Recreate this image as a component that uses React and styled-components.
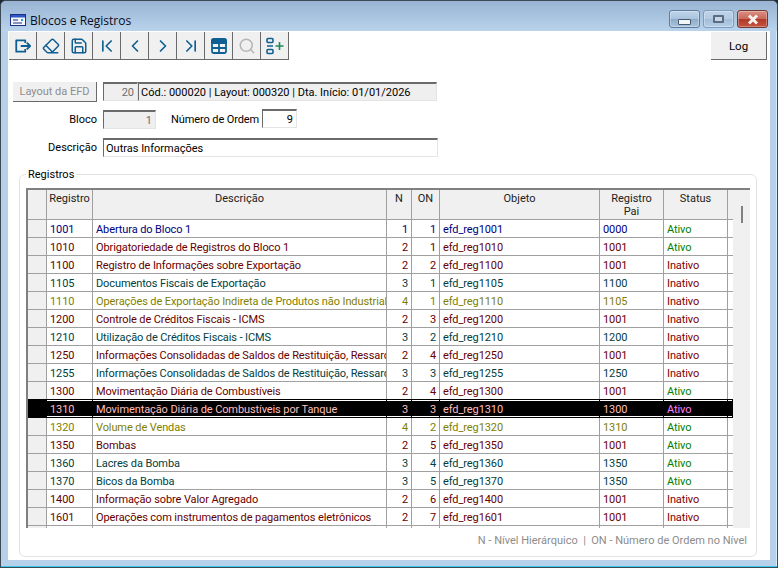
import React from 'react';
import styled, { createGlobalStyle } from 'styled-components';
import { Eraser, Save, ChevronFirst, ChevronLeft, ChevronRight, ChevronLast, Search } from 'lucide-react';

const GlobalStyle = createGlobalStyle`
  html, body {
    margin: 0;
    padding: 0;
    background: #1c2b33;
  }
  body {
    font-family: Roboto, "Liberation Sans", Arial, sans-serif;
    font-size: 11px;
    color: #000;
  }
`;

const LEVEL_COLORS = {
  1: { color: '#000080', inverted: '#ffff7f' },
  2: { color: '#660000', inverted: '#ffbfbf' },
  3: { color: '#004040', inverted: '#ffbfbf' },
  4: { color: '#808000', inverted: '#7f7fff' },
};

const rows = [
  ['1001', 'Abertura do Bloco 1', 1, 1, '0000', 'Ativo'],
  ['1010', 'Obrigatoriedade de Registros do Bloco 1', 2, 1, '1001', 'Ativo'],
  ['1100', 'Registro de Informações sobre Exportação', 2, 2, '1001', 'Inativo'],
  ['1105', 'Documentos Fiscais de Exportação', 3, 1, '1100', 'Inativo'],
  ['1110', 'Operações de Exportação Indireta de Produtos não Industrializados', 4, 1, '1105', 'Inativo'],
  ['1200', 'Controle de Créditos Fiscais - ICMS', 2, 3, '1001', 'Inativo'],
  ['1210', 'Utilização de Créditos Fiscais - ICMS', 3, 2, '1200', 'Inativo'],
  ['1250', 'Informações Consolidadas de Saldos de Restituição, Ressarcimento', 2, 4, '1001', 'Inativo'],
  ['1255', 'Informações Consolidadas de Saldos de Restituição, Ressarcimento', 3, 3, '1250', 'Inativo'],
  ['1300', 'Movimentação Diária de Combustíveis', 2, 4, '1001', 'Ativo'],
  ['1310', 'Movimentação Diária de Combustíveis por Tanque', 3, 3, '1300', 'Ativo'],
  ['1320', 'Volume de Vendas', 4, 2, '1310', 'Ativo'],
  ['1350', 'Bombas', 2, 5, '1001', 'Ativo'],
  ['1360', 'Lacres da Bomba', 3, 4, '1350', 'Ativo'],
  ['1370', 'Bicos da Bomba', 3, 5, '1350', 'Ativo'],
  ['1400', 'Informação sobre Valor Agregado', 2, 6, '1001', 'Inativo'],
  ['1601', 'Operações com instrumentos de pagamentos eletrônicos', 2, 7, '1001', 'Inativo'],
];

const COLUMNS = '19px 46px 294px 25px 28px 160px 64px 64px 5px';

const Window = styled.div`
  width: 778px;
  height: 568px;
  box-sizing: border-box;
  display: flex;
  flex-direction: column;
  overflow: hidden;
  border-radius: 6px 6px 0 0;
  border: 1px solid #3c4a55;
  background: #b7d1ea;
  box-shadow: inset 0 -1px 0 #35c6e8, inset -1px 0 0 #d6ecf8;
`;

const TitleBar = styled.div`
  height: 30px;
  flex: none;
  display: flex;
  align-items: flex-start;
  padding: 0 9px 0 9px;
  background: linear-gradient(#98b4d2, #b9d3ec);
`;

const TitleIcon = styled.svg`
  width: 16px;
  height: 12px;
  margin-top: 13px;
`;

const TitleText = styled.div`
  margin: 11px 0 0 4px;
  font-family: "Open Sans", sans-serif;
  font-size: 12px;
  line-height: 17px;
  color: #0a0a20;
  flex: 1;
`;

const Captions = styled.div`
  display: flex;
  gap: 3px;
  margin-top: 9px;
`;

const CaptionButton = styled.div`
  width: 31px;
  height: 18px;
  box-sizing: border-box;
  display: flex;
  align-items: center;
  justify-content: center;
  border: 1px solid ${(p) => (p.$close ? '#6f3a33' : p.$dim ? '#7e9cbd' : '#5f7c9e')};
  border-radius: 3px;
  background: ${(p) =>
    p.$close
      ? 'linear-gradient(#dc8f84 0%, #c96a5c 48%, #b13a2a 52%, #c4543f 100%)'
      : p.$dim
        ? 'linear-gradient(#bed3e8 0%, #b3cbe3 48%, #a2bdd9 52%, #b6cfe7 100%)'
        : 'linear-gradient(#c0d5e9 0%, #a9c3de 48%, #8eabc9 52%, #a8c4de 100%)'};
  box-shadow: inset 0 0 0 1px rgba(255, 255, 255, 0.3);
`;

const MinGlyph = styled.div`
  width: 11px;
  height: 4px;
  margin-top: 5px;
  background: #f2f5f8;
  border: 1px solid #47586c;
  border-radius: 1px;
`;

const MaxGlyph = styled.div`
  width: 7px;
  height: 4px;
  background: #c6d6e6;
  border: 2px solid #5b6c80;
  border-radius: 1px;
`;

const Content = styled.div`
  flex: none;
  width: 762px;
  height: 529px;
  margin-left: 7px;
  background: #fff;
  display: flex;
  flex-direction: column;
`;

const ToolbarRow = styled.div`
  display: flex;
  justify-content: space-between;
  padding: 1px 3px 0 1px;
`;

const Toolbar = styled.div`
  display: flex;
`;

const ToolButton = styled.div`
  width: 28px;
  height: 28px;
  box-sizing: border-box;
  display: flex;
  align-items: center;
  justify-content: center;
  background: #f0f0f0;
  border-right: 1px solid #6a6a6a;
  border-bottom: 1px solid #6a6a6a;
  color: #0f5f92;
`;

const LogButton = styled(ToolButton)`
  width: 56px;
  color: #000;
  font-size: 11.5px;
`;

const Form = styled.div`
  display: flex;
  flex-direction: column;
  padding-top: 22px;
`;

const FormRow = styled.div`
  display: flex;
  align-items: flex-start;
  height: ${(p) => p.$height}px;
`;

const Label = styled.div`
  width: 89px;
  text-align: right;
  line-height: 19px;
  margin-right: 6px;
  flex: none;
`;

const EfdButton = styled.div`
  width: 84px;
  height: 20px;
  margin: 0 6px 0 5px;
  box-sizing: border-box;
  flex: none;
  text-align: center;
  line-height: 19px;
  background: #f0f0f0;
  color: #8d8d8d;
  border-right: 1px solid #6a6a6a;
  border-bottom: 1px solid #6a6a6a;
`;

const Field = styled.div`
  width: ${(p) => p.$width}px;
  height: 19px;
  box-sizing: border-box;
  flex: none;
  padding: 0 ${(p) => (p.$right ? 3 : 2)}px 0 2px;
  text-align: ${(p) => (p.$right ? 'right' : 'left')};
  line-height: 17px;
  white-space: nowrap;
  overflow: hidden;
  background: ${(p) => (p.$readOnly ? '#efefef' : '#fff')};
  color: ${(p) => (p.$muted ? '#6d6d6d' : '#000')};
  border-top: 2px solid #6b6b6b;
  border-left: 1px solid #6b6b6b;
  border-right: 1px solid #e4e4e4;
  border-bottom: 1px solid #e4e4e4;
`;

const OrderLabel = styled.div`
  line-height: 19px;
  margin: 0 4px 0 15px;
  white-space: nowrap;
  width: 87px;
  flex: none;
  letter-spacing: -0.1px;
`;

const OrderField = styled(Field)`
  margin-top: -1px;
`;

const GroupBox = styled.fieldset`
  margin: 6px 0 0 11px;
  padding: 7px 6px 0;
  width: 738px;
  height: 389px;
  box-sizing: border-box;
  border: 1px solid #e3e3e3;
  border-radius: 6px;
`;

const GroupLegend = styled.legend`
  margin-left: 0;
  padding: 0 2px;
  line-height: 13px;
`;

const GridFrame = styled.div`
  display: flex;
  width: 724px;
  height: 340px;
  box-sizing: border-box;
  border-top: 2px solid #808080;
  border-left: 2px solid #808080;
  overflow: hidden;
`;

const GridBody = styled.div`
  width: 705px;
  flex: none;
`;

const RowLine = styled.div`
  display: grid;
  grid-template-columns: ${COLUMNS};
  height: ${(p) => (p.$header ? 30 : 18)}px;
  background: ${(p) => (p.$header ? '#f0f0f0' : '#fff')};
`;

const SelectedLine = styled(RowLine)`
  background: #000;
  box-shadow: 0 -1px 0 #000;
  position: relative;
`;

const Cell = styled.div`
  box-sizing: border-box;
  border-right: 1px solid #a0a0a0;
  border-bottom: 1px solid #a0a0a0;
  padding: 0 ${(p) => (p.$right ? 3 : 0)}px 0 ${(p) => (p.$right ? 0 : 3)}px;
  line-height: 19px;
  letter-spacing: -0.1px;
  white-space: nowrap;
  overflow: hidden;
  text-align: ${(p) => (p.$right ? 'right' : 'left')};
  color: ${(p) => p.$color || '#000'};
`;

const HeaderCell = styled(Cell)`
  padding: 2px 0 0;
  text-align: center;
  white-space: normal;
  line-height: 13px;
  letter-spacing: 0;
  color: #222;
`;

const IndicatorCell = styled(Cell)`
  background: #f0f0f0;
  padding: 0;
`;

const SelectedCell = styled(Cell)`
  border-color: #000;
  box-shadow: inset 0 1px 0 #fff, inset 0 -1px 0 #fff;
`;

const SelectedIndicator = styled(Cell)`
  border-color: #000;
  background: #000;
`;

const FillerCell = styled.div`
  border-bottom: 1px solid #a0a0a0;
`;

const ScrollStrip = styled.div`
  width: 17px;
  flex: none;
  background: #f0f0f0;
  display: flex;
  justify-content: center;
`;

const ScrollThumb = styled.div`
  width: 2px;
  height: 17px;
  margin-top: 16px;
  background: #808080;
`;

const Legend = styled.div`
  margin-top: 6px;
  padding-right: 3px;
  text-align: right;
  line-height: 13px;
  color: #8c8c8c;
`;

const statusColor = (status) => (status === 'Ativo' ? '#008000' : '#800000');
const invert = (status) => (status === 'Ativo' ? '#ff7fff' : '#7fffff');

function Row({ row, selected }) {
  const [code, description, level, order, parent, status] = row;
  const { color, inverted } = LEVEL_COLORS[level];

  if (selected) {
    return (
      <SelectedLine>
        <SelectedIndicator />
        <SelectedCell $color={inverted}>{code}</SelectedCell>
        <SelectedCell $color={inverted}>{description}</SelectedCell>
        <SelectedCell $color={inverted} $right>{level}</SelectedCell>
        <SelectedCell $color={inverted} $right>{order}</SelectedCell>
        <SelectedCell $color={inverted}>efd_reg{code}</SelectedCell>
        <SelectedCell $color={inverted}>{parent}</SelectedCell>
        <SelectedCell $color={invert(status)}>{status}</SelectedCell>
        <SelectedCell />
      </SelectedLine>
    );
  }

  return (
    <RowLine>
      <IndicatorCell />
      <Cell $color={color}>{code}</Cell>
      <Cell $color={color}>{description}</Cell>
      <Cell $color={color} $right>{level}</Cell>
      <Cell $color={color} $right>{order}</Cell>
      <Cell $color={color}>efd_reg{code}</Cell>
      <Cell $color={color}>{parent}</Cell>
      <Cell $color={statusColor(status)}>{status}</Cell>
      <FillerCell />
    </RowLine>
  );
}

const ExitIcon = () => (
  <svg width="18" height="18" viewBox="0 0 24 24" fill="none" stroke="currentColor" strokeWidth="2.4" strokeLinejoin="round">
    <path d="M15 8V4.5H3v15h12V16" />
    <path d="M9 12h12M17 7.5l4.5 4.5-4.5 4.5" />
  </svg>
);

const TableIcon = () => (
  <svg width="18" height="18" viewBox="0 0 18 18" fill="none" stroke="currentColor" strokeWidth="1.8">
    <rect x="2" y="2" width="14" height="14" rx="1.5" />
    <path d="M2 3.5h14v2.5h-14z" fill="currentColor" />
    <path d="M2 11h14M9 6v10" />
  </svg>
);

const AddListIcon = () => (
  <svg width="20" height="18" viewBox="0 0 20 18" fill="none" strokeWidth="1.6">
    <rect x="2" y="1.5" width="6" height="4" rx="1" stroke="#0f5f92" />
    <path d="M2 9h6" stroke="#0f5f92" />
    <rect x="2" y="12.5" width="6" height="4" rx="1" stroke="#0f5f92" />
    <path d="M10.5 9h8M14.5 5v8" stroke="#1c8a5a" />
  </svg>
);

const WindowIcon = () => (
  <TitleIcon viewBox="0 0 16 12">
    <rect x="0.5" y="0.5" width="15" height="11" fill="#f4f8fc" stroke="#1d2f86" />
    <rect x="1" y="1" width="14" height="2.5" fill="#2f58c0" />
    <path d="M3 6h5M3 9h9" stroke="#1d2f86" strokeWidth="1" />
    <rect x="11" y="5" width="2" height="2" fill="#2f9bd8" />
  </TitleIcon>
);

export default function App() {
  return (
    <>
      <GlobalStyle />
      <Window>
        <TitleBar>
          <WindowIcon />
          <TitleText>Blocos e Registros</TitleText>
          <Captions>
            <CaptionButton><MinGlyph /></CaptionButton>
            <CaptionButton $dim><MaxGlyph /></CaptionButton>
            <CaptionButton $close>
              <svg width="14" height="11" viewBox="0 0 14 11">
                <path d="M3 1.5l8 8M11 1.5l-8 8" stroke="#f6f0ee" strokeWidth="3" />
              </svg>
            </CaptionButton>
          </Captions>
        </TitleBar>
        <Content>
          <ToolbarRow>
            <Toolbar>
              <ToolButton><ExitIcon /></ToolButton>
              <ToolButton><Eraser size={18} strokeWidth={2} /></ToolButton>
              <ToolButton><Save size={18} strokeWidth={2} /></ToolButton>
              <ToolButton><ChevronFirst size={20} strokeWidth={2} /></ToolButton>
              <ToolButton><ChevronLeft size={20} strokeWidth={2} /></ToolButton>
              <ToolButton><ChevronRight size={20} strokeWidth={2} /></ToolButton>
              <ToolButton><ChevronLast size={20} strokeWidth={2} /></ToolButton>
              <ToolButton><TableIcon /></ToolButton>
              <ToolButton><Search size={18} strokeWidth={2} color="#b5b5b5" /></ToolButton>
              <ToolButton><AddListIcon /></ToolButton>
            </Toolbar>
            <LogButton>Log</LogButton>
          </ToolbarRow>
          <Form>
            <FormRow $height={28}>
              <EfdButton>Layout da EFD</EfdButton>
              <Field $width={35} $readOnly $right $muted>20</Field>
              <Field $width={299} $readOnly>Cód.: 000020 | Layout: 000320 | Dta. Início: 01/01/2026</Field>
            </FormRow>
            <FormRow $height={28}>
              <Label>Bloco</Label>
              <Field $width={53} $readOnly $right $muted>1</Field>
              <OrderLabel>Número de Ordem</OrderLabel>
              <OrderField $width={35} $right>9</OrderField>
            </FormRow>
            <FormRow $height={24}>
              <Label>Descrição</Label>
              <Field $width={335}>Outras Informações</Field>
            </FormRow>
          </Form>
          <GroupBox>
            <GroupLegend>Registros</GroupLegend>
            <GridFrame>
              <GridBody>
                <RowLine $header>
                  <IndicatorCell />
                  <HeaderCell>Registro</HeaderCell>
                  <HeaderCell>Descrição</HeaderCell>
                  <HeaderCell>N</HeaderCell>
                  <HeaderCell>ON</HeaderCell>
                  <HeaderCell>Objeto</HeaderCell>
                  <HeaderCell>Registro<br />Pai</HeaderCell>
                  <HeaderCell>Status</HeaderCell>
                  <FillerCell />
                </RowLine>
                {rows.map((row) => (
                  <Row key={row[0]} row={row} selected={row[0] === '1310'} />
                ))}
                <RowLine>
                  <IndicatorCell />
                  <Cell /><Cell /><Cell /><Cell /><Cell /><Cell /><Cell />
                  <FillerCell />
                </RowLine>
              </GridBody>
              <ScrollStrip><ScrollThumb /></ScrollStrip>
            </GridFrame>
            <Legend>N - Nível Hierárquico&nbsp; |&nbsp; ON - Número de Ordem no Nível</Legend>
          </GroupBox>
        </Content>
      </Window>
    </>
  );
}
